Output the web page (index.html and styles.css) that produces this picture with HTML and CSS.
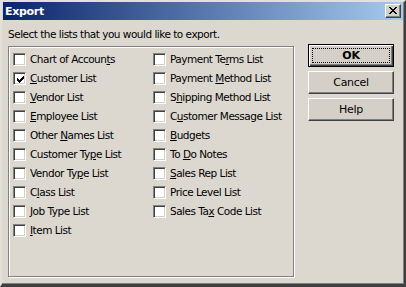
FILE: index.html
```html
<!DOCTYPE html>
<html lang="en">
<head>
    <meta charset="UTF-8">
    <title>Export</title>
    <link rel="stylesheet" href="styles.css">
</head>
<body>
    <div class="window">
        <div class="titlebar">
            <span class="title">Export</span>
            <span class="close">
                <svg width="8" height="7" viewBox="0 0 8 7"><path d="M0 0h2v1h-2zM6 0h2v1h-2zM1 1h2v1h-2zM5 1h2v1h-2zM2 2h4v1h-4zM3 3h2v1h-2zM2 4h4v1h-4zM1 5h2v1h-2zM5 5h2v1h-2zM0 6h2v1h-2zM6 6h2v1h-2z" fill="#000"/></svg>
            </span>
        </div>

        <div class="content">
            <p class="prompt">Select the lists that you would like to export.</p>

            <div class="main">
                <div class="groupbox">
                    <div class="list">
                        <div class="item"><span class="check"></span><span>Chart of Accoun<u>t</u>s</span></div>
                        <div class="item"><span class="check checked"><svg width="9" height="9" viewBox="0 0 9 9"><path d="M1 3h1v3h-1zM2 4h1v3h-1zM3 5h1v3h-1zM4 4h1v3h-1zM5 3h1v3h-1zM6 2h1v3h-1zM7 1h1v3h-1z" fill="#000"/></svg></span><span><u>C</u>ustomer List</span></div>
                        <div class="item"><span class="check"></span><span><u>V</u>endor List</span></div>
                        <div class="item"><span class="check"></span><span><u>E</u>mployee List</span></div>
                        <div class="item"><span class="check"></span><span>Other <u>N</u>ames List</span></div>
                        <div class="item"><span class="check"></span><span>Customer Ty<u>p</u>e List</span></div>
                        <div class="item"><span class="check"></span><span>Vendor Ty<u>p</u>e List</span></div>
                        <div class="item"><span class="check"></span><span>C<u>l</u>ass List</span></div>
                        <div class="item"><span class="check"></span><span><u>J</u>ob Type List</span></div>
                        <div class="item"><span class="check"></span><span><u>I</u>tem List</span></div>

                        <div class="item"><span class="check"></span><span>Payment Te<u>r</u>ms List</span></div>
                        <div class="item"><span class="check"></span><span>Payment <u>M</u>ethod List</span></div>
                        <div class="item"><span class="check"></span><span>S<u>h</u>ipping Method List</span></div>
                        <div class="item"><span class="check"></span><span>C<u>u</u>stomer Message List</span></div>
                        <div class="item"><span class="check"></span><span><u>B</u>udgets</span></div>
                        <div class="item"><span class="check"></span><span>To <u>D</u>o Notes</span></div>
                        <div class="item"><span class="check"></span><span><u>S</u>ales Rep List</span></div>
                        <div class="item"><span class="check"></span><span>Price Level List</span></div>
                        <div class="item"><span class="check"></span><span>Sales Ta<u>x</u> Code List</span></div>
                    </div>
                </div>

                <div class="buttons">
                    <button class="btn default"><span class="focus">OK</span></button>
                    <button class="btn">Cancel</button>
                    <button class="btn">Help</button>
                </div>
            </div>
        </div>
    </div>
</body>
</html>
```

FILE: styles.css
```css
* {
    margin: 0;
    padding: 0;
    box-sizing: border-box;
}

body {
    width: 406px;
    height: 287px;
    overflow: hidden;
    font-family: "DejaVu Sans", sans-serif;
    font-size: 10.5px;
    color: #000;
}

.window {
    width: 406px;
    height: 287px;
    background: #dcd8d0;
    border-style: solid;
    border-width: 2px 2px 3px 2px;
    border-color: #e4e0d8 #404040 #404040 #e4e0d8;
    box-shadow: inset -1px -1px 0 #808080;
    padding: 0 1px 0 1px;
}

.titlebar {
    height: 18px;
    background: linear-gradient(90deg, #0a246a 0%, #a6caf0 100%);
    display: flex;
    align-items: center;
    justify-content: space-between;
    padding: 0 2px 0 2px;
}

.title {
    color: #fff;
    font-weight: bold;
    font-size: 11px;
    letter-spacing: -0.3px;
}

.close {
    width: 16px;
    height: 14px;
    background: #d4d0c8;
    border-style: solid;
    border-width: 1px;
    border-color: #fff #404040 #404040 #fff;
    box-shadow: inset -1px -1px 0 #808080;
    display: flex;
    align-items: center;
    justify-content: center;
}

.close svg {
    display: block;
    margin: 0 1px 1px 0;
}

.content {
    padding: 8px 0 0 5px;
}

.prompt {
    line-height: 13px;
    letter-spacing: -0.5px;
}

.main {
    display: flex;
    align-items: flex-start;
    margin-top: 3px;
}

.groupbox {
    width: 286px;
    height: 231px;
    margin-top: 2px;
    border: 1px solid #808080;
    box-shadow: 1px 1px 0 #fff, inset 1px 1px 0 #fff;
    padding: 6px 0 0 4px;
}

.list {
    display: grid;
    grid-template-rows: repeat(10, 19px);
    grid-template-columns: 140px auto;
    grid-auto-flow: column;
}

.item {
    display: flex;
    align-items: flex-start;
    line-height: 13px;
    letter-spacing: -0.5px;
}

.item u {
    text-underline-offset: 1px;
}

.check {
    width: 13px;
    height: 13px;
    flex: none;
    background: #fff;
    border-style: solid;
    border-width: 1px;
    border-color: #808080 #fff #fff #808080;
    box-shadow: inset 1px 1px 0 #404040, inset -1px -1px 0 #d4d0c8;
    margin-right: 4px;
    display: flex;
    align-items: center;
    justify-content: center;
}

.check svg {
    display: block;
    margin: 1px 0 0 1px;
}

.buttons {
    display: flex;
    flex-direction: column;
    gap: 4px;
    margin-left: 14px;
}

.btn {
    width: 86px;
    height: 23px;
    font-family: "DejaVu Sans", sans-serif;
    font-size: 11px;
    letter-spacing: -0.3px;
    color: #000;
    background: #d4d0c8;
    border-style: solid;
    border-width: 1px;
    border-color: #fff #404040 #404040 #fff;
    box-shadow: inset -1px -1px 0 #808080;
    display: flex;
    align-items: center;
    justify-content: center;
}

.btn.default {
    border: 1px solid #000;
    box-shadow: inset 1px 1px 0 #fff, inset -1px -1px 0 #404040, inset -2px -2px 0 #808080;
    font-weight: bold;
    padding: 3px;
}

.focus {
    width: 100%;
    height: 100%;
    border: 1px dotted #000;
    display: flex;
    align-items: center;
    justify-content: center;
}
```
